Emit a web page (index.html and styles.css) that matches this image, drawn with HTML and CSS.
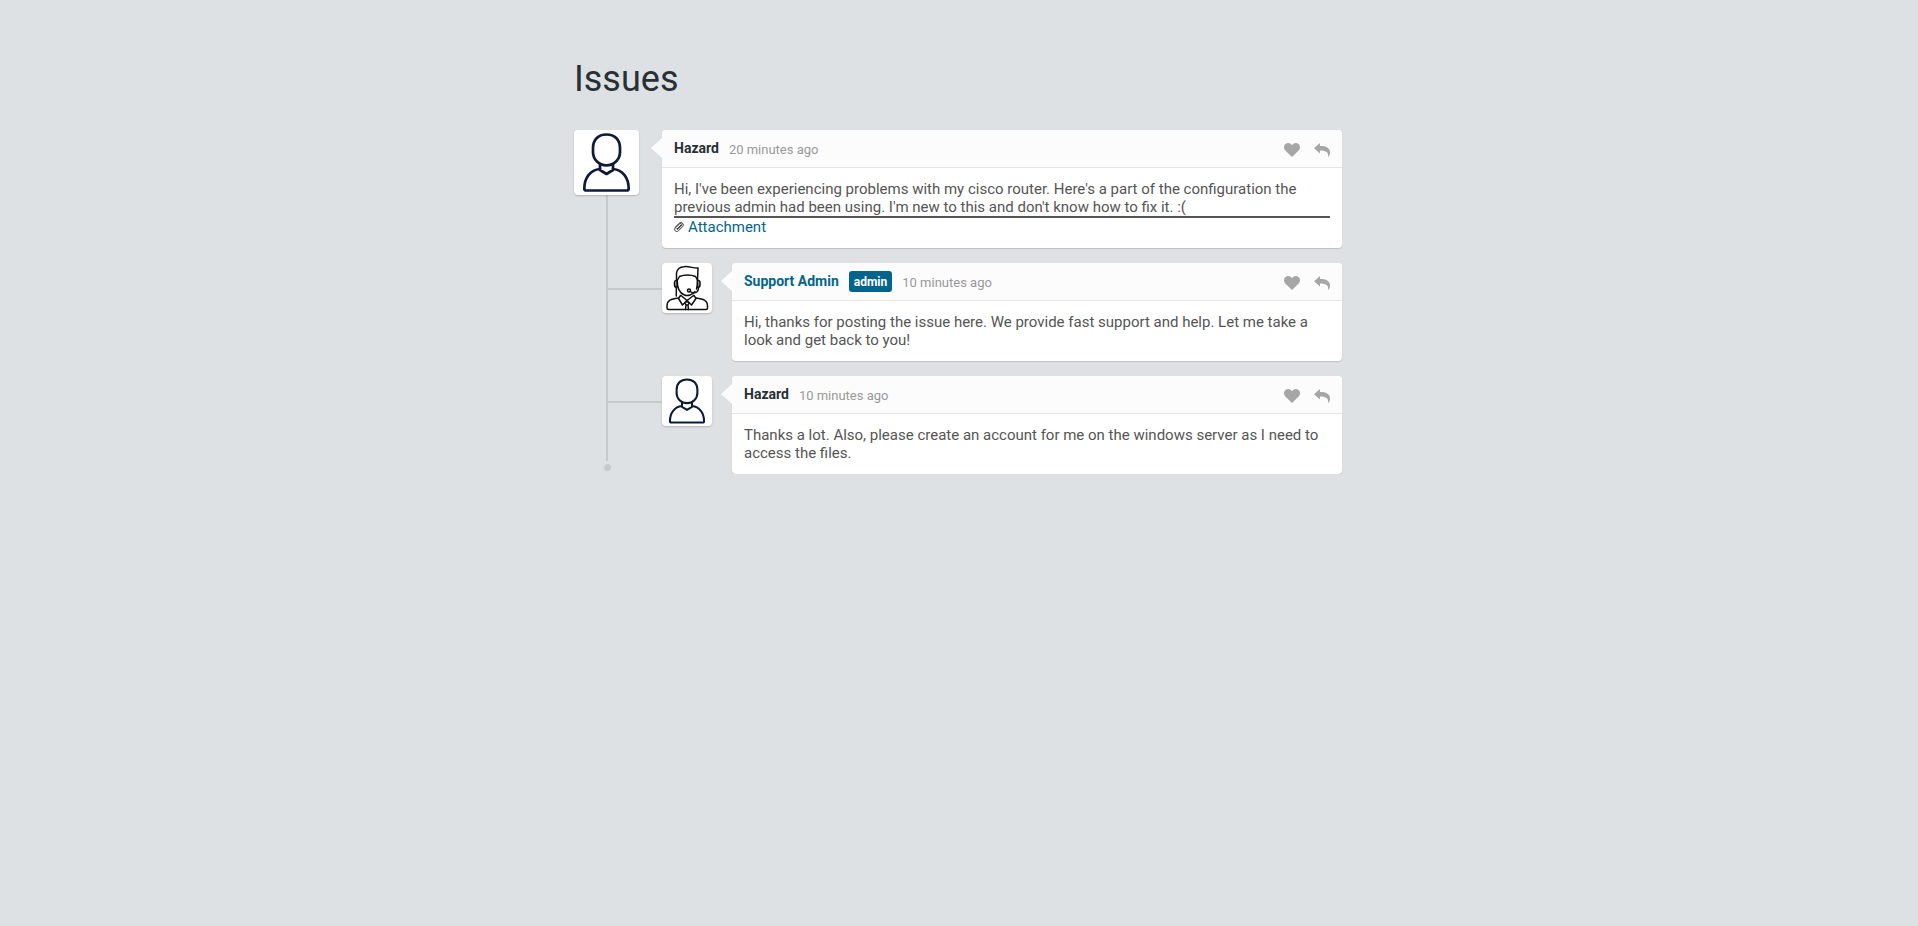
FILE: index.html
```
<!DOCTYPE html>
<html lang="en">
<head>
<meta charset="utf-8">
<title>Issues</title>
<link rel="stylesheet" href="styles.css">
</head>
<body>
<svg class="defs" width="0" height="0">
  <symbol id="user" viewBox="0 0 65 65">
    <g fill="none" stroke="#0e1a38" stroke-width="2.700" stroke-linecap="round" stroke-linejoin="round">
      <path d="M32.500 4.500C24 4.500 19 10 19 18V22C19 29.500 25 35.300 32.500 35.300S46 29.500 46 22V18C46 10 41 4.500 32.500 4.500Z"/>
      <path d="M26 34.500V40L32.500 44L39 40V34.500"/>
      <path d="M26 39C16 40 10.500 48 10.300 58.500Q10.300 60.500 12.300 60.500H52.700Q54.700 60.500 54.700 58.500C54.500 48 49 40 39 39"/>
    </g>
  </symbol>
  <symbol id="agent" viewBox="0 0 50 50">
    <g fill="none" stroke="#111" stroke-width="1.500" stroke-linejoin="round" stroke-linecap="round">
      <path d="M14.500 17V10Q15.500 4 22 3.700C28 3 31 5.500 36 5L35.500 17"/>
      <path d="M15.500 17L17.500 13.500C22 11.500 29 11.500 33.500 13.500L35.500 17"/>
      <path d="M15.300 17C15 25 17 30 22.500 32Q25 33 28 32Q31 31 33 28.500M35.600 17Q35.600 23 34.500 26"/>
      <path d="M15 17.500Q12.500 17 12.500 19.500V22Q12.500 24.500 15 24.500ZM35.500 17.500Q38 17 38 19.500V22Q38 24.500 35.500 24.500Z" fill="#aaa"/>
      <path d="M14.300 25V33M36.500 25Q36 30.500 30.500 30L28.500 28.500"/>
      <circle cx="27" cy="27.500" r="1.500"/>
      <path d="M18.500 32.500L16.500 35.500L20.500 42L25 37.500L19 32.500M32 32.500L34 35.500L29.500 42L25 37.500L31.500 32.500"/>
      <path d="M25 38L23 40L24 42L23.500 46.500M25 38L27 40L26 42L26.500 46.500M24 42H26"/>
      <path d="M16.500 35C9 36 5 37 5 43V45Q5 46.500 6.500 46.500H44Q45.500 46.500 45.500 45V43C45.500 37 41 36 34 35"/>
    </g>
  </symbol>
  <symbol id="heart" viewBox="0 0 16 14">
    <path fill="#a6a6a6" d="M8 14L1.300 7.400C-.5 5.500-.3 2.600 1.300 1.200C3.200-.5 6-.3 8 2.200C10-.3 12.800-.5 14.700 1.200C16.300 2.600 16.500 5.500 14.700 7.400Z"/>
  </symbol>
  <symbol id="reply" viewBox="0 0 16 14">
    <path fill="#a6a6a6" d="M0 5.200L6 0V3C12 3 16 4.800 16 9.500C16 11.500 15.300 13 14 14C14.800 9.300 12.500 7.500 6 7.400V10.500Z"/>
  </symbol>
</svg>
<main class="comments">
  <h1 class="title">Issues</h1>
  <div class="thread">
    <article class="comment">
      <div class="avatar avatar-main"><svg><use href="#user"/></svg></div>
      <div class="box">
        <header class="head">
          <h6 class="name">Hazard</h6><span class="time">20 minutes ago</span>
          <svg class="icon"><use href="#heart"/></svg><svg class="icon"><use href="#reply"/></svg>
        </header>
        <div class="content">Hi, I've been experiencing problems with my cisco router. Here's a part of the configuration the previous admin had been using. I'm new to this and don't know how to fix it. :(
          <hr class="rule">
          <div class="attachment">
            <svg class="clip" viewBox="0 0 10 10"><path fill="none" stroke="#222" stroke-width=".9" stroke-linecap="round" d="M3.200 6.800L6.800 3.200M.9 5.500L5.300 1.200C7.600-.7 10.700 2.200 8.700 4.600L4.300 8.900C2.100 10.600-.6 8 1.300 5.900L5.600 1.900C7.300 .9 8.500 2.400 7.400 3.900L4 7.200C3.200 7.800 2.500 7 3.200 6.300"/></svg><a class="link">Attachment</a>
          </div>
        </div>
      </div>
    </article>
    <div class="replies">
      <article class="comment">
        <div class="avatar"><svg><use href="#agent"/></svg></div>
        <div class="box">
          <header class="head">
            <h6 class="name by-author">Support Admin</h6><span class="badge">admin</span><span class="time">10 minutes ago</span>
            <svg class="icon"><use href="#heart"/></svg><svg class="icon"><use href="#reply"/></svg>
          </header>
          <div class="content">Hi, thanks for posting the issue here. We provide fast support and help. Let me take a look and get back to you!</div>
        </div>
      </article>
      <article class="comment">
        <div class="avatar"><svg><use href="#user"/></svg></div>
        <div class="box">
          <header class="head">
            <h6 class="name">Hazard</h6><span class="time">10 minutes ago</span>
            <svg class="icon"><use href="#heart"/></svg><svg class="icon"><use href="#reply"/></svg>
          </header>
          <div class="content">Thanks a lot. Also, please create an account for me on the windows server as I need to access the files.</div>
        </div>
      </article>
    </div>
  </div>
</main>
</body>
</html>
```
FILE: styles.css
```
* { box-sizing: border-box; margin: 0; padding: 0; }
body { background: #dee1e3; font-family: Roboto, Arial, sans-serif; color: #555; padding-right: 2px; }
.defs { position: absolute; }
.comments { width: 768px; margin: 0 auto; padding-top: 58px; }
.title { font-size: 36px; font-weight: 400; line-height: 42px; color: #283035; margin-bottom: 30px; }
.thread { position: relative; }
.thread::before { content: ""; position: absolute; left: 32px; top: 20px; bottom: 13px; width: 2px; background: #c7cacb; }
.thread::after { content: ""; position: absolute; left: 30px; bottom: 3px; width: 7px; height: 7px; border-radius: 50%; background: #c7cacb; }
.comment { display: flex; justify-content: space-between; align-items: flex-start; position: relative; }
.replies { padding-left: 88px; }
.replies .comment { margin-top: 15px; }
.replies .comment::before { content: ""; position: absolute; left: -55px; top: 25px; width: 55px; height: 2px; background: #c7cacb; }
.avatar { width: 50px; height: 50px; background: #fff; border-radius: 4px; box-shadow: 0 1px 2px rgba(0,0,0,.2); position: relative; z-index: 1; }
.avatar-main { width: 65px; height: 65px; }
.avatar svg { display: block; width: 100%; height: 100%; }
.box { width: 610px; background: #fff; border-radius: 4px; box-shadow: 0 1px 1px rgba(0,0,0,.15); position: relative; }
.avatar-main + .box { width: 680px; }
.head { height: 38px; display: flex; align-items: center; padding: 0 12px; background: #fcfcfc; border-bottom: 1px solid #e5e5e5; border-radius: 4px 4px 0 0; }
.head::before { content: ""; position: absolute; left: -11px; top: 8px; border: 10px solid transparent; border-left: 0; border-right: 11px solid #fcfcfc; }
.name { font-size: 14px; font-weight: 700; line-height: 16px; color: #283035; margin: 0 10px 2px 0; }
.by-author { color: #03658c; }
.badge { background: #03658c; color: #fff; font-size: 12px; font-weight: 700; line-height: 15px; padding: 4px 5px 2px; border-radius: 3px; margin-right: 10px; }
.time { font-size: 13px; line-height: 15px; color: #999; margin: 2px auto 0 0; }
.icon { width: 16px; height: 14px; margin: 3px 0 0 14px; }
.content { padding: 12px; font-size: 15px; line-height: 18px; }
.rule { border: 0; height: 2px; background: #555; }
.attachment { display: flex; align-items: center; height: 18px; }
.clip { width: 10px; height: 10px; margin-right: 4px; }
.link { color: #03658c; }
```
